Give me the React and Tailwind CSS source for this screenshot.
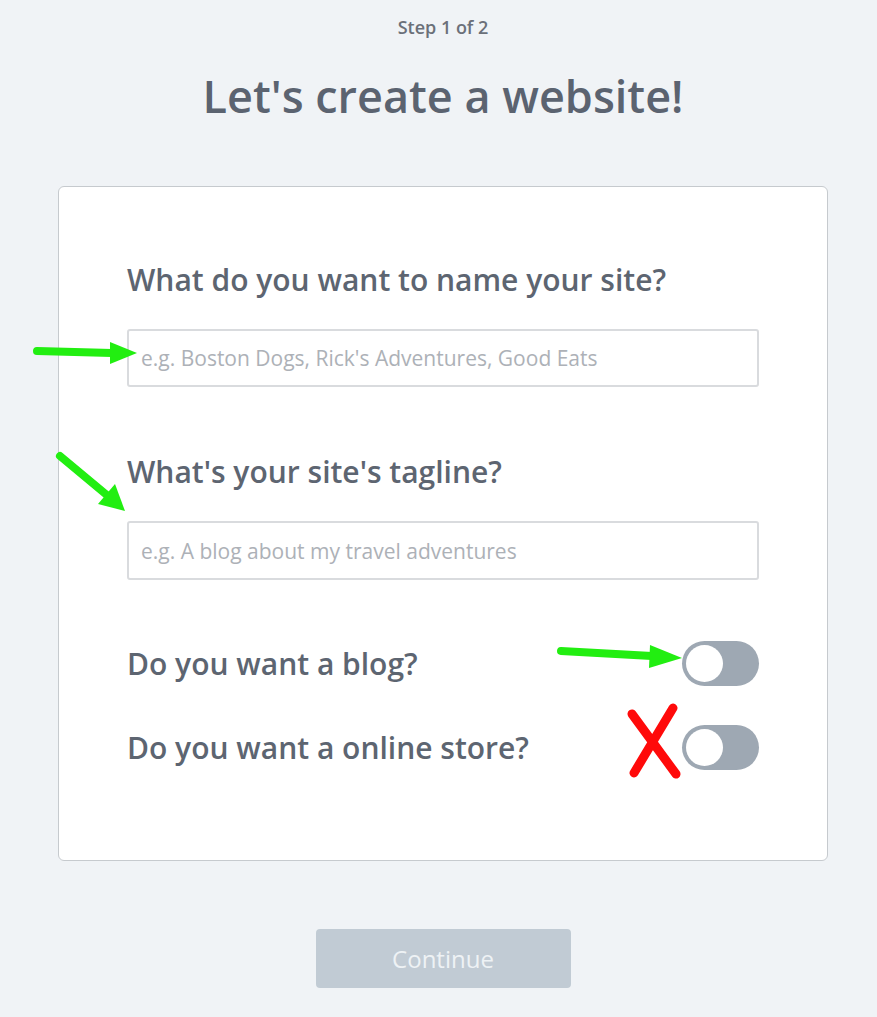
import React from "react";

const Toggle = () => (
  <div className="w-[77px] h-[45px] rounded-full bg-[#9ea8b3] p-[4px] flex items-center">
    <div className="w-[37px] h-[37px] rounded-full bg-white" />
  </div>
);

const App = () => {
  return (
    <div
      className="relative min-h-[1017px] bg-[#f0f3f6] flex flex-col items-center pl-[9px]"
      style={{ fontFamily: '"Open Sans", "Liberation Sans", sans-serif' }}
    >
      <div className="mt-[15px] text-[18px] leading-[24px] font-semibold text-[#6b7079]">
        Step 1 of 2
      </div>
      <h1 className="mt-[31px] text-[45px] leading-[52px] font-semibold text-[#5b6370]">
        Let's create a website!
      </h1>

      {/* form card */}
      <div className="mt-[64px] w-[770px] bg-white border border-[#c6cace] rounded-[6px] px-[68px] pt-[75px] pb-[90px]">
        <label className="block text-[30px] leading-[36px] font-semibold text-[#5d6571]">
          What do you want to name your site?
        </label>
        <input
          className="mt-[31px] w-full h-[58px] border-2 border-[#d9dbde] rounded-[3px] px-[12px] text-[21px] text-[#5d6571] placeholder:text-[#adb1b7] outline-none"
          placeholder="e.g. Boston Dogs, Rick's Adventures, Good Eats"
        />

        <label className="block mt-[67px] text-[30px] leading-[36px] font-semibold text-[#5d6571]">
          What's your site's tagline?
        </label>
        <input
          className="mt-[31px] w-full h-[59px] border-2 border-[#d9dbde] rounded-[3px] px-[12px] text-[21px] text-[#5d6571] placeholder:text-[#adb1b7] outline-none"
          placeholder="e.g. A blog about my travel adventures"
        />

        <div className="mt-[61px] flex items-center justify-between">
          <span className="text-[30px] leading-[36px] font-semibold text-[#5d6571]">Do you want a blog?</span>
          <Toggle />
        </div>
        <div className="mt-[39px] flex items-center justify-between">
          <span className="text-[30px] leading-[36px] font-semibold text-[#5d6571]">Do you want a online store?</span>
          <Toggle />
        </div>
      </div>

      <button className="mt-[68px] w-[255px] h-[59px] rounded-[4px] bg-[#c1cbd4] text-[24px] text-[#eef2f5]">
        Continue
      </button>

      {/* annotations */}
      <svg className="absolute inset-0 pointer-events-none" width="877" height="1017">
        <g stroke="#22ee11" strokeWidth="8" strokeLinecap="round" fill="#22ee11">
          <line x1="37" y1="351" x2="112" y2="353" />
          <polygon points="110,342 137,353 110,364" stroke="none" />
          <line x1="60" y1="456" x2="108" y2="496" />
          <polygon points="98,504 125,511 115,484" stroke="none" />
          <line x1="561" y1="651" x2="652" y2="656" />
          <polygon points="650,645 682,658 649,668" stroke="none" />
        </g>
        <g stroke="#ff0a0a" strokeWidth="9" strokeLinecap="round">
          <line x1="632" y1="714" x2="676" y2="774" />
          <line x1="673" y1="708" x2="634" y2="773" />
        </g>
      </svg>
    </div>
  );
};

export default App;
